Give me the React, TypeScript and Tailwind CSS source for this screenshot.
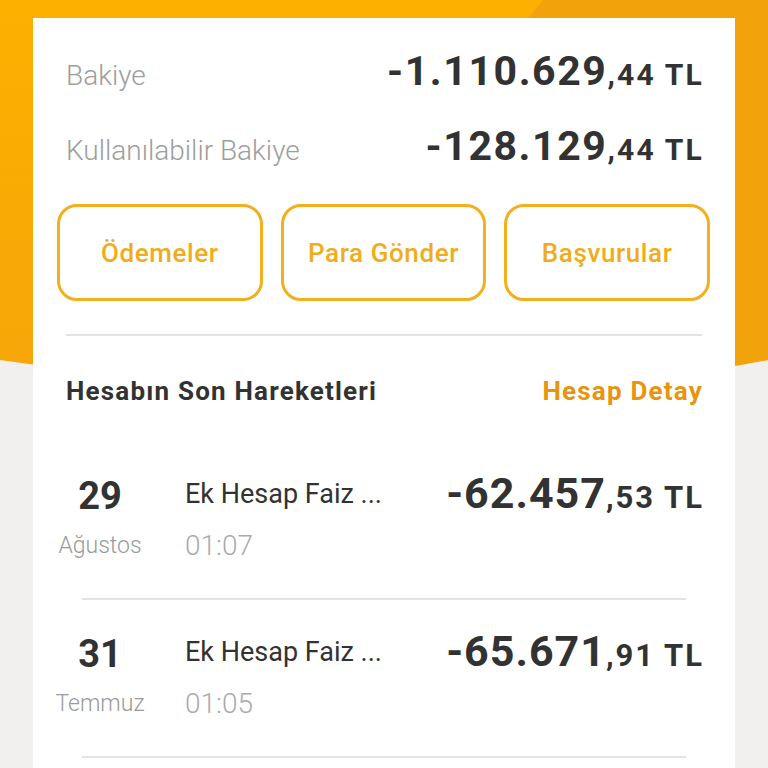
import React from "react";

const font = { fontFamily: "Roboto, 'Noto Sans', sans-serif" };

type Tx = { day: string; month: string; title: string; time: string; main: string; cents: string };

const transactions: Tx[] = [
  { day: "29", month: "Ağustos", title: "Ek Hesap Faiz ...", time: "01:07", main: "-62.457", cents: ",53 TL" },
  { day: "31", month: "Temmuz", title: "Ek Hesap Faiz ...", time: "01:05", main: "-65.671", cents: ",91 TL" },
];

function HeaderBg() {
  return (
    <svg className="absolute left-0 top-0" width="768" height="420" viewBox="0 0 768 420">
      <defs>
        <linearGradient id="org" x1="0" y1="0" x2="0" y2="1">
          <stop offset="0" stopColor="#FDB000" />
          <stop offset="1" stopColor="#F6A608" />
        </linearGradient>
      </defs>
      <path d="M0 0 H768 V360 Q384 418 0 360 Z" fill="url(#org)" />
      <path d="M543 0 H768 V360 L735 366 V18 H528 Z" fill="#F2A30B" />
    </svg>
  );
}

function ActionButton({ label }: { label: string }) {
  return (
    <button className="flex-1 h-[97px] rounded-[20px] border-[3px] border-[#F3AF1E] bg-white text-[26px] font-medium tracking-[0.6px] text-[#F0AD1B] leading-none">
      {label}
    </button>
  );
}

export default function App() {
  return (
    <div className="relative w-[768px] h-[768px] overflow-hidden bg-[#F1F0EE]" style={font}>
      <HeaderBg />
      <div className="relative mx-[33px] mt-[18px] bg-white pt-[33px] h-[800px]">
        <div className="px-[33px]">
          <div className="flex items-baseline justify-between leading-none">
            <span className="text-[28px] font-light text-[#9E9E9E]">Bakiye</span>
            <span className="font-bold text-[#323232] whitespace-nowrap">
              <span className="text-[41px] tracking-[1.6px]">-1.110.629</span>
              <span className="text-[30px] tracking-[2.2px] mr-[-2px]">,44 TL</span>
            </span>
          </div>
          <div className="mt-[34px] flex items-baseline justify-between leading-none">
            <span className="text-[28px] font-light text-[#9E9E9E]">Kullanılabilir Bakiye</span>
            <span className="font-bold text-[#323232] whitespace-nowrap">
              <span className="text-[41px] tracking-[1.6px]">-128.129</span>
              <span className="text-[30px] tracking-[2.2px] mr-[-2px]">,44 TL</span>
            </span>
          </div>
        </div>

        <div className="mt-[37px] flex gap-[18px] pl-[24px] pr-[25px]">
          <ActionButton label="Ödemeler" />
          <ActionButton label="Para Gönder" />
          <ActionButton label="Başvurular" />
        </div>

        <div className="px-[33px]">
          <div className="mt-[33px] h-[2px] bg-[#E3E3E3]" />
          <div className="mt-[42px] flex items-baseline justify-between leading-none">
            <span className="text-[26px] font-bold tracking-[1.2px] text-[#323232]">Hesabın Son Hareketleri</span>
            <span className="text-[26px] font-bold tracking-[1.2px] mr-[-1px] text-[#E8940E]">Hesap Detay</span>
          </div>

          <div className="mt-[38px]">
            {transactions.map((t) => (
              <div key={t.day}>
                <div className="flex h-[156px] items-start">
                  <div className="w-[68px] mt-[35px] flex flex-col items-center leading-none">
                    <span className="text-[38px] font-bold text-[#323232]">{t.day}</span>
                    <span className="mt-[19px] whitespace-nowrap text-[23px] font-light text-[#9A9A9A]">{t.month}</span>
                  </div>
                  <div className="ml-[51px] mt-[39px] flex flex-col leading-none">
                    <span className="text-[27px] text-[#323232] whitespace-nowrap">{t.title}</span>
                    <span className="mt-[24px] text-[28px] font-light text-[#ABABAB]">{t.time}</span>
                  </div>
                  <div className="ml-auto mt-[30px] leading-none font-bold text-[#323232] whitespace-nowrap">
                    <span className="text-[43px] tracking-[1px]">{t.main}</span>
                    <span className="text-[31px] tracking-[2px] mr-[-2px]">{t.cents}</span>
                  </div>
                </div>
                <div className="mx-[16px] h-[2px] bg-[#E3E3E3]" />
              </div>
            ))}
          </div>
        </div>
      </div>
    </div>
  );
}
